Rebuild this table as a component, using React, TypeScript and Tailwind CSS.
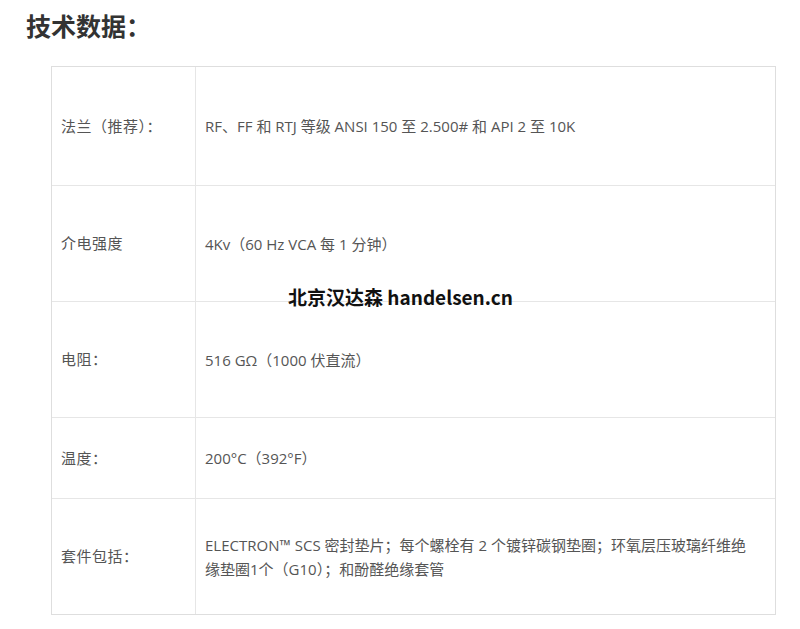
import React from "react";

const rows: { label: string; value: React.ReactNode; h: string }[] = [
  { label: "法兰（推荐）：", value: "RF、FF 和 RTJ 等级 ANSI 150 至 2.500# 和 API 2 至 10K", h: "h-[118px]" },
  { label: "介电强度", value: "4Kv（60 Hz VCA 每 1 分钟）", h: "h-[116px]" },
  { label: "电阻：", value: "516 GΩ（1000 伏直流）", h: "h-[116px]" },
  { label: "温度：", value: "200°C（392°F）", h: "h-[81px]" },
  {
    label: "套件包括：",
    value: (
      <span>
        ELECTRON™ SCS 密封垫片；每个螺栓有 2 个镀锌碳钢垫圈；环氧层压玻璃纤维绝
        <br />
        缘垫圈1个（G10）；和酚醛绝缘套管
      </span>
    ),
    h: "h-[116px]",
  },
];

export default function App() {
  return (
    <div
      className="relative w-[800px] h-[629px] bg-white overflow-hidden"
      style={{ fontFamily: '"Open Sans", "Noto Sans CJK SC", sans-serif' }}
    >
      <h2 className="pl-[26px] pt-[10px] text-[25px] leading-[32px] font-bold text-[#333]">技术数据：</h2>
      <div className="ml-[51px] mt-[24px] w-[725px] border border-[#dedede] text-[15px] text-[#555]">
        {rows.map((r, i) => (
          <div
            key={i}
            className={`grid grid-cols-[144px_1fr] ${r.h} ${i > 0 ? "border-t border-[#e6e6e6]" : ""}`}
          >
            <div className="flex items-center pl-[9px] border-r border-[#e6e6e6] tracking-[0.5px]">{r.label}</div>
            <div className="flex items-center pl-[9px] pr-[6px] leading-[24px] whitespace-nowrap">{r.value}</div>
          </div>
        ))}
      </div>
      <div
        className="absolute left-[288px] top-[283px] text-[19px] font-bold text-[#111] whitespace-nowrap"
        style={{ fontFamily: '"Noto Sans CJK SC", "Noto Sans", sans-serif' }}
      >
        北京汉达森 handelsen.cn
      </div>
    </div>
  );
}
